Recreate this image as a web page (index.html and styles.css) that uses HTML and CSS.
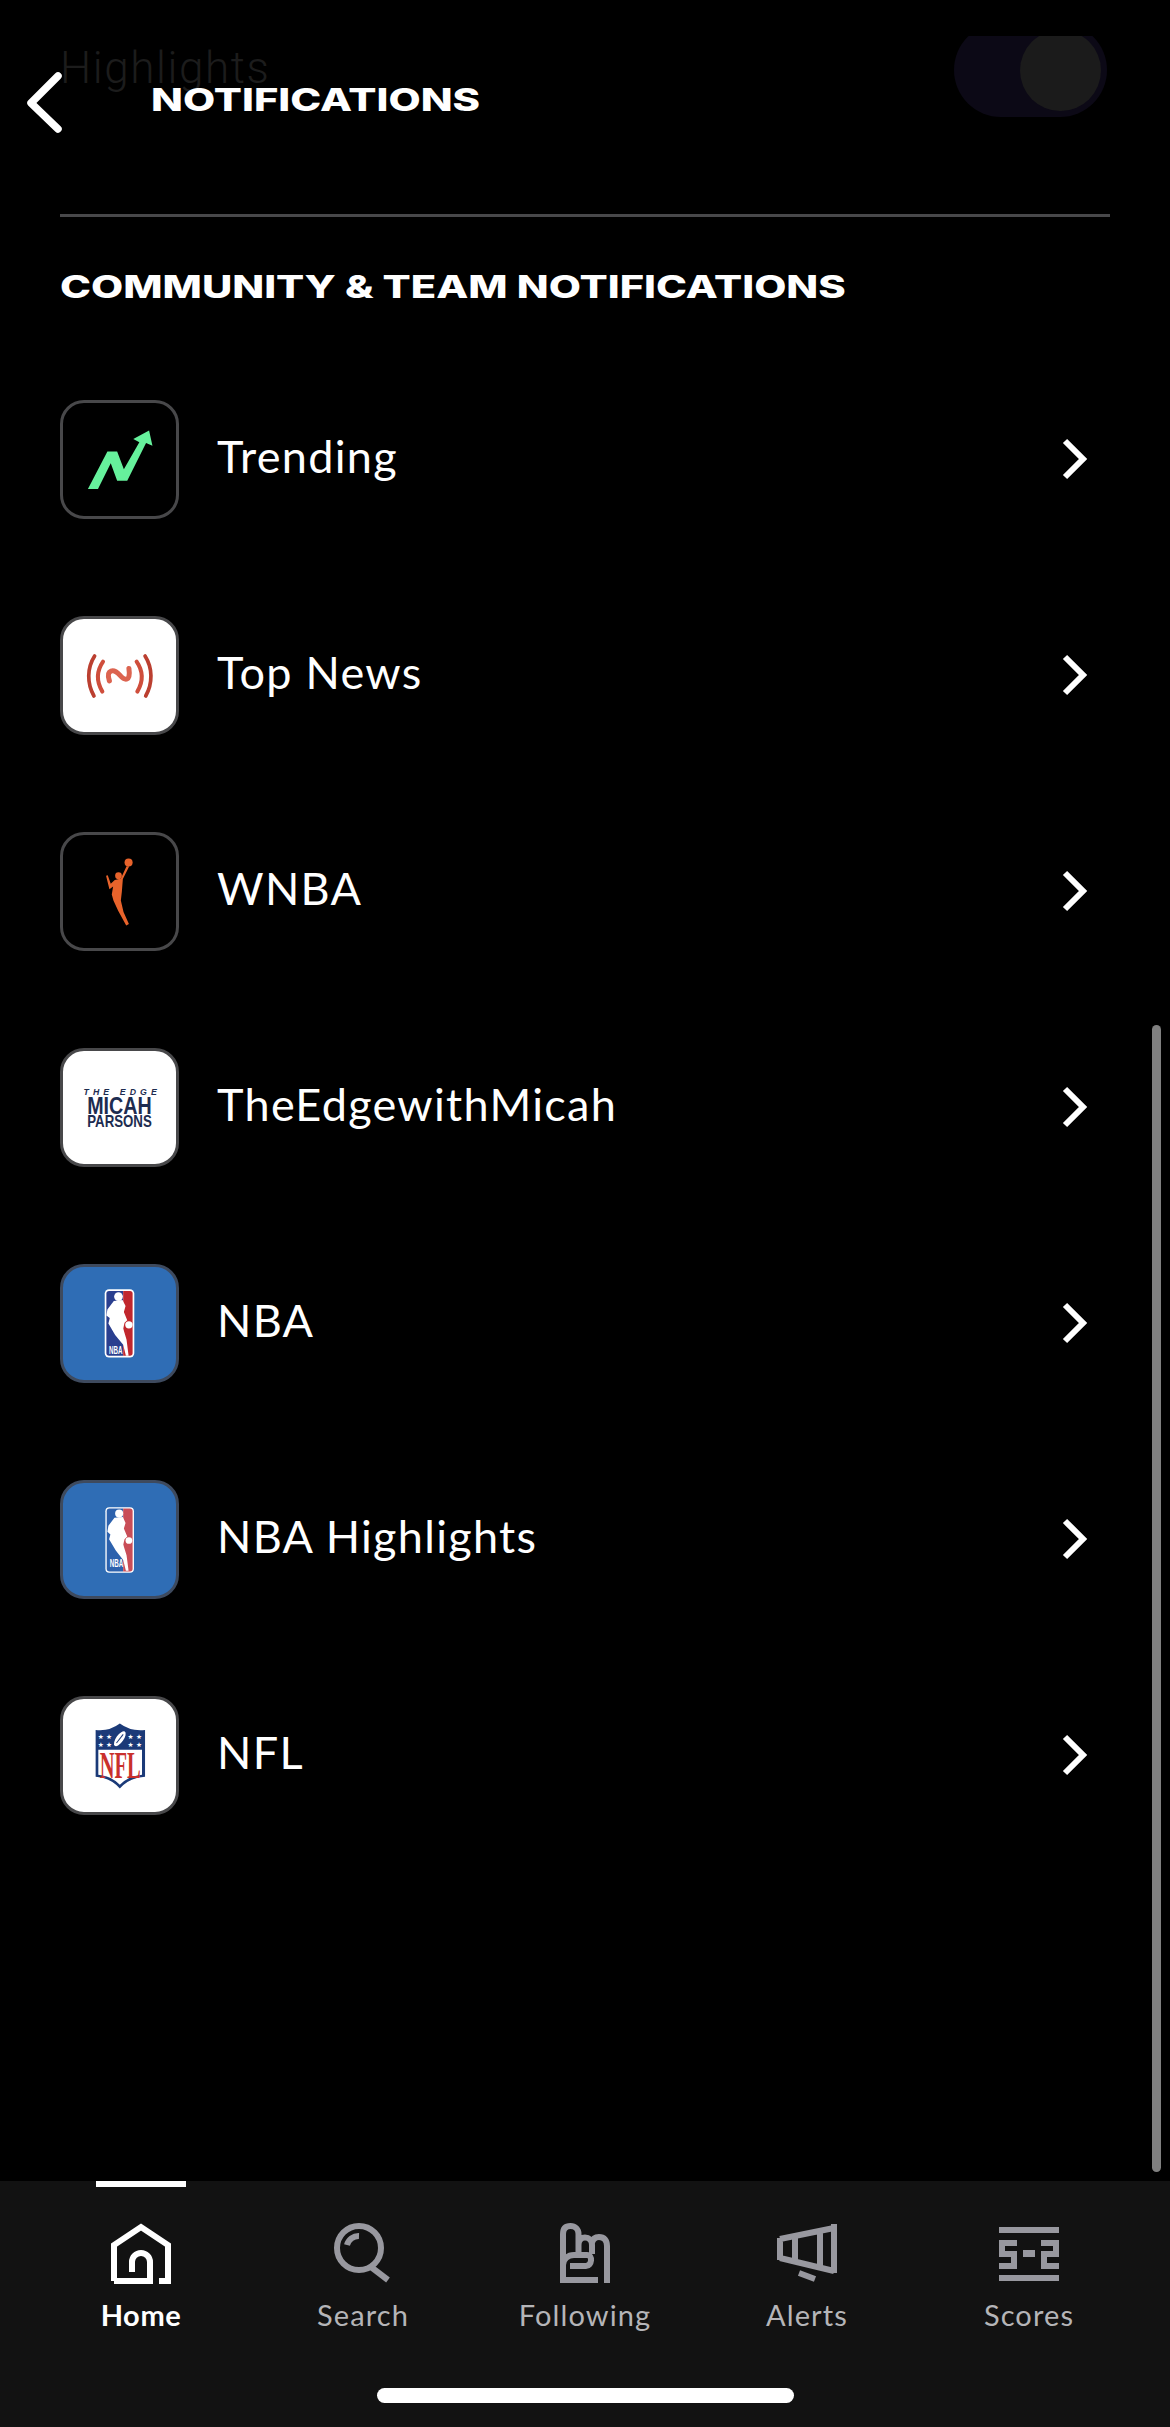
FILE: index.html
```html
<!DOCTYPE html>
<html lang="en">
<head>
<meta charset="utf-8">
<title>Notifications</title>
<link rel="stylesheet" href="styles.css">
</head>
<body>
<div class="page">
  <main class="content">
    <div class="ghost-row">
      <span class="ghost-label">Highlights</span>
      <span class="toggle"><span class="knob"></span></span>
    </div>
    <hr class="divider">
    <h2 class="wide section-title">COMMUNITY &amp; TEAM NOTIFICATIONS</h2>
    <ul class="list">
      <li class="row">
        <span class="tile tile-dark">
          <svg viewBox="62 62 354 354"><polygon fill="#66f19c" points="145,327 203,215 232,215 252,268 298,188 280,178 327,153 337,198 318,190 262,302 232,302 213,250 175,327"/></svg>
        </span>
        <span class="row-label">Trending</span>
        <svg class="chev" viewBox="0 0 30 44"><path d="M5 4 L23 22 L5 40"/></svg>
      </li>
      <li class="row">
        <span class="tile tile-light">
          <svg viewBox="62 710 354 354"><g fill="none" stroke-linecap="round"><path stroke="#bb3f30" stroke-width="11" d="M165 829 C142 865 142 910 163 948 M315 829 C338 865 338 910 317 948"/><path stroke="#cf4e3c" stroke-width="12" d="M190 846 C170 875 170 905 188 935 M290 846 C310 875 310 905 292 935"/><path stroke="#dc6450" stroke-width="15" d="M209 903 C198 868 222 866 240 886 C255 903 273 906 267 866"/></g></svg>
        </span>
        <span class="row-label">Top News</span>
        <svg class="chev" viewBox="0 0 30 44"><path d="M5 4 L23 22 L5 40"/></svg>
      </li>
      <li class="row">
        <span class="tile tile-dark">
          <svg viewBox="33 22 354 354"><g fill="#e8632b"><circle cx="237" cy="113" r="12"/><circle cx="207" cy="152" r="10"/><path d="M239 124 L220 162 L217 200 L214 226 L222 260 L238 296 L230 300 L206 256 L192 226 L187 208 L191 184 L180 192 L170 152 L175 151 L184 176 L196 165 L214 160 L231 124 Z"/></g></svg>
        </span>
        <span class="row-label">WNBA</span>
        <svg class="chev" viewBox="0 0 30 44"><path d="M5 4 L23 22 L5 40"/></svg>
      </li>
      <li class="row">
        <span class="tile tile-light">
          <svg viewBox="62 55 354 354"><g class="micah"><text class="micah-top" x="132" y="196" textLength="218" lengthAdjust="spacing">THE EDGE</text><text class="micah-main" x="143" y="250" textLength="192" lengthAdjust="spacingAndGlyphs">MICAH</text><text class="micah-sub" x="143" y="290" textLength="192" lengthAdjust="spacingAndGlyphs">PARSONS</text></g></svg>
        </span>
        <span class="row-label">TheEdgewithMicah</span>
        <svg class="chev" viewBox="0 0 30 44"><path d="M5 4 L23 22 L5 40"/></svg>
      </li>
      <li class="row">
        <span class="tile tile-blue">
          <svg viewBox="62 705 354 354">
            <rect x="195" y="780" width="88" height="203" rx="13" fill="#fff"/>
            <path d="M208 785 H250 V978 H208 Q200 978 200 970 V793 Q200 785 208 785 Z" fill="#2a3f8f"/>
            <path d="M250 785 H270 Q278 785 278 793 V970 Q278 978 270 978 H250 Z" fill="#c1272d"/>
            <g fill="#fff"><circle cx="236" cy="802" r="13"/><circle cx="267" cy="886" r="11"/><path d="M222 815 L248 812 L257 830 L252 848 L262 872 L254 880 L250 897 L260 930 L266 978 L258 978 L250 945 L226 916 L206 882 L210 866 L200 858 L203 840 Z"/></g>
            <text class="nba-mark" x="208" y="972" textLength="40" lengthAdjust="spacingAndGlyphs">NBA</text>
          </svg>
        </span>
        <span class="row-label">NBA</span>
        <svg class="chev" viewBox="0 0 30 44"><path d="M5 4 L23 22 L5 40"/></svg>
      </li>
      <li class="row">
        <span class="tile tile-blue">
          <svg viewBox="62 62 354 354">
            <rect x="197" y="143" width="85" height="195" rx="12" fill="#fff"/>
            <path d="M209 147 H250 V334 H209 Q201 334 201 326 V155 Q201 147 209 147 Z" fill="#2d62ad"/>
            <path d="M250 147 H270 Q278 147 278 155 V326 Q278 334 270 334 H250 Z" fill="#c94d57"/>
            <g fill="#fff"><circle cx="238" cy="162" r="12"/><circle cx="267" cy="242" r="10"/><path d="M224 174 L249 172 L257 190 L252 206 L262 230 L254 238 L250 254 L260 286 L266 332 L258 332 L250 300 L228 272 L208 238 L212 224 L203 216 L206 198 Z"/></g>
            <text class="nba-mark" x="210" y="320" textLength="40" lengthAdjust="spacingAndGlyphs">NBA</text>
          </svg>
        </span>
        <span class="row-label">NBA Highlights</span>
        <svg class="chev" viewBox="0 0 30 44"><path d="M5 4 L23 22 L5 40"/></svg>
      </li>
      <li class="row">
        <span class="tile tile-light">
          <svg viewBox="62 710 354 354">
            <path fill="#1b3a78" d="M168 811 Q208 816 240 792 Q272 816 315 811 V950 Q270 952 240 985 Q210 952 168 950 Z"/>
            <path fill="#fff" d="M176 870 H306 V944 Q265 948 240 974 Q215 948 176 944 Z"/>
            <ellipse cx="240" cy="837" rx="11" ry="26" fill="#fff" transform="rotate(35 240 837)"/>
            <path d="M230 850 L250 824" stroke="#1b3a78" stroke-width="3"/>
            <g class="nfl-stars"><text x="183" y="838">★</text><text x="208" y="838">★</text><text x="272" y="838">★</text><text x="297" y="838">★</text><text x="183" y="862">★</text><text x="208" y="862">★</text><text x="272" y="862">★</text><text x="297" y="862">★</text></g>
            <text class="nfl-mark" x="180" y="954" textLength="122" lengthAdjust="spacingAndGlyphs">NFL</text>
          </svg>
        </span>
        <span class="row-label">NFL</span>
        <svg class="chev" viewBox="0 0 30 44"><path d="M5 4 L23 22 L5 40"/></svg>
      </li>
    </ul>
  </main>

  <nav class="tabbar">
    <a class="tab tab-active">
      <span class="tab-line"></span>
      <svg class="tab-icon" viewBox="0 0 60 62"><path d="M3 58 V22 L30 4 L57 22 V58 H48 M21 49 V39 A9 9 0 0 1 39 39 V58 H3"/></svg>
      <span class="tab-label">Home</span>
    </a>
    <a class="tab">
      <svg class="tab-icon" viewBox="0 0 60 62"><circle cx="26" cy="25" r="22"/><path d="M14 22 A12 12 0 0 1 26 13"/><path d="M38 44 L55 57"/></svg>
      <span class="tab-label">Search</span>
    </a>
    <a class="tab">
      <svg class="tab-icon" viewBox="0 0 50 62"><path d="M3 60 V11 C3 5 6 3 10.5 3 C15 3 18.5 6 18.5 11 V30 M18.5 22 C18.5 16 22 14.5 25 14.5 C29 14.5 32 17 32 22 V31 M32 20 C33 15 36 14 39 14 C44 14 47 17 47 23 V60 M3 42 C3 36 8 32 14 32 H27 C33 32 32 43 26 43 H10 M3 57 H38"/></svg>
      <span class="tab-label">Following</span>
    </a>
    <a class="tab">
      <svg class="tab-icon" viewBox="0 0 60 62"><path d="M3 15 V37 M3 16 L57 5 M3 35 L57 48 M57 1 V50 M18 14 V38 M43 8 V45 M22 50 L38 56"/></svg>
      <span class="tab-label">Alerts</span>
    </a>
    <a class="tab">
      <svg class="tab-icon score-icon" viewBox="0 0 60 62"><rect y="4" width="60" height="6"/><rect y="52" width="60" height="6"/><path d="M0 17 H18 V23 H6 V28 H18 V46 H0 V40 H12 V34 H0 Z"/><rect x="24" y="27" width="12" height="7"/><path d="M42 17 H60 V34 H48 V40 H60 V46 H42 V28 H54 V23 H42 Z"/></svg>
      <span class="tab-label">Scores</span>
    </a>
  </nav>
  <div class="home-bar"></div>

  <header class="topbar">
    <svg class="back" viewBox="0 0 40 64"><path d="M32 6 L5 33 L32 59"/></svg>
    <h1 class="wide top-title">NOTIFICATIONS</h1>
  </header>
  <div class="scrollbar"></div>
</div>
</body>
</html>
```
FILE: styles.css
```css
* { box-sizing: border-box; }
html, body { margin: 0; padding: 0; background: #000; }
.page {
  position: relative;
  width: 1170px;
  height: 2427px;
  overflow: hidden;
  display: flex;
  flex-direction: column;
  background: #000;
  color: #fff;
  font-family: "Lato", "Noto Sans", sans-serif;
}
.content {
  flex: 1;
  min-height: 0;
  padding: 36px 60px 0;
}
.ghost-row {
  height: 81px;
  overflow: hidden;
  display: flex;
  justify-content: space-between;
  align-items: flex-start;
  padding-right: 3px;
}
.ghost-label {
  font-family: "Roboto", sans-serif;
  font-weight: 300;
  font-size: 44px;
  letter-spacing: 1.6px;
  line-height: 52px;
  margin-top: 6px;
  color: #1c1c1c;
}
.toggle {
  display: block;
  position: relative;
  width: 153px;
  height: 94px;
  margin-top: -13px;
  border-radius: 47px;
  background: #0c0916;
}
.knob {
  position: absolute;
  top: 7px;
  right: 6px;
  width: 81px;
  height: 81px;
  border-radius: 50%;
  background: #1b1b1b;
}
.divider {
  height: 3px;
  margin: 97px 0 0;
  border: 0;
  background: #48484a;
}
.wide {
  margin: 0;
  font-family: "Inter", "Liberation Sans", sans-serif;
  font-weight: 800;
  font-size: 31px;
  line-height: 38px;
  white-space: nowrap;
  transform-origin: left center;
}
.section-title {
  width: 600px;
  margin-top: 51px;
  transform: scaleX(1.345);
}
.list {
  list-style: none;
  margin: 0;
  padding: 0;
  margin-top: 45px;
}
.row {
  display: flex;
  align-items: center;
  height: 216px;
  gap: 38px;
}
.tile {
  flex: none;
  width: 119px;
  height: 119px;
  border: 3px solid #48484a;
  border-radius: 24px;
  overflow: hidden;
  display: block;
}
.tile svg { display: block; width: 119px; height: 119px; margin: -3px; }
.tile-dark { background: #000; }
.tile-light { background: #fff; }
.tile-blue { background: #2f6db5; border-color: #3e4a5e; }
.row-label {
  flex: 1;
  font-size: 45px;
  letter-spacing: 1.3px;
  line-height: 50px;
  padding-bottom: 6px;
  color: #fff;
}
.chev {
  flex: none;
  width: 30px;
  height: 44px;
  margin-right: 20px;
}
.chev path {
  fill: none;
  stroke: #fff;
  stroke-width: 6;
}
.micah text { fill: #1d2c50; font-family: "Liberation Sans", sans-serif; font-weight: 700; }
.micah-top { font-size: 26px; font-style: italic; }
.micah-main { font-size: 73px; }
.micah-sub { font-size: 48px; }
.nba-mark { fill: #fff; font-family: "Liberation Sans", sans-serif; font-weight: 700; font-size: 34px; }
.nfl-stars text { fill: #fff; font-size: 20px; text-anchor: middle; font-family: "DejaVu Sans", sans-serif; }
.nfl-mark { fill: #c9302c; font-family: "Liberation Serif", serif; font-weight: 700; font-size: 112px; }
.tabbar {
  flex: none;
  height: 246px;
  padding: 0 30px;
  display: grid;
  grid-template-columns: repeat(5, 222px);
  background: #121212;
}
.tab {
  position: relative;
  display: flex;
  flex-direction: column;
  align-items: center;
  padding-top: 42px;
  color: #b5b5b8;
}
.tab-active { color: #fff; }
.tab-line {
  position: absolute;
  top: 0;
  left: 66px;
  width: 90px;
  height: 6px;
  background: #fff;
}
.tab-icon {
  display: block;
  height: 62px;
  width: auto;
  fill: none;
  stroke: #98989f;
  stroke-width: 6;
}
.tab-active .tab-icon { stroke: #fff; }
.score-icon { fill: #98989f; stroke: none; }
.tab-label {
  font-size: 29px;
  letter-spacing: 1.1px;
  line-height: 36px;
  margin-top: 12px;
}
.tab-active .tab-label { font-weight: 700; letter-spacing: 0.6px; }
.home-bar {
  position: absolute;
  left: 377px;
  top: 2388px;
  width: 417px;
  height: 15px;
  border-radius: 8px;
  background: #fff;
}
.topbar {
  position: absolute;
  top: 70px;
  left: 0;
  display: flex;
  align-items: flex-start;
}
.back {
  display: block;
  width: 40px;
  height: 64px;
  margin-left: 26px;
  fill: none;
  stroke: #fff;
  stroke-width: 7.5;
  stroke-linecap: round;
  stroke-linejoin: round;
}
.top-title {
  margin: 11px 0 0 85px;
  transform: scaleX(1.345);
}
.scrollbar {
  position: absolute;
  top: 1025px;
  right: 9px;
  width: 9px;
  height: 1147px;
  border-radius: 5px;
  background: #808080;
}
```
